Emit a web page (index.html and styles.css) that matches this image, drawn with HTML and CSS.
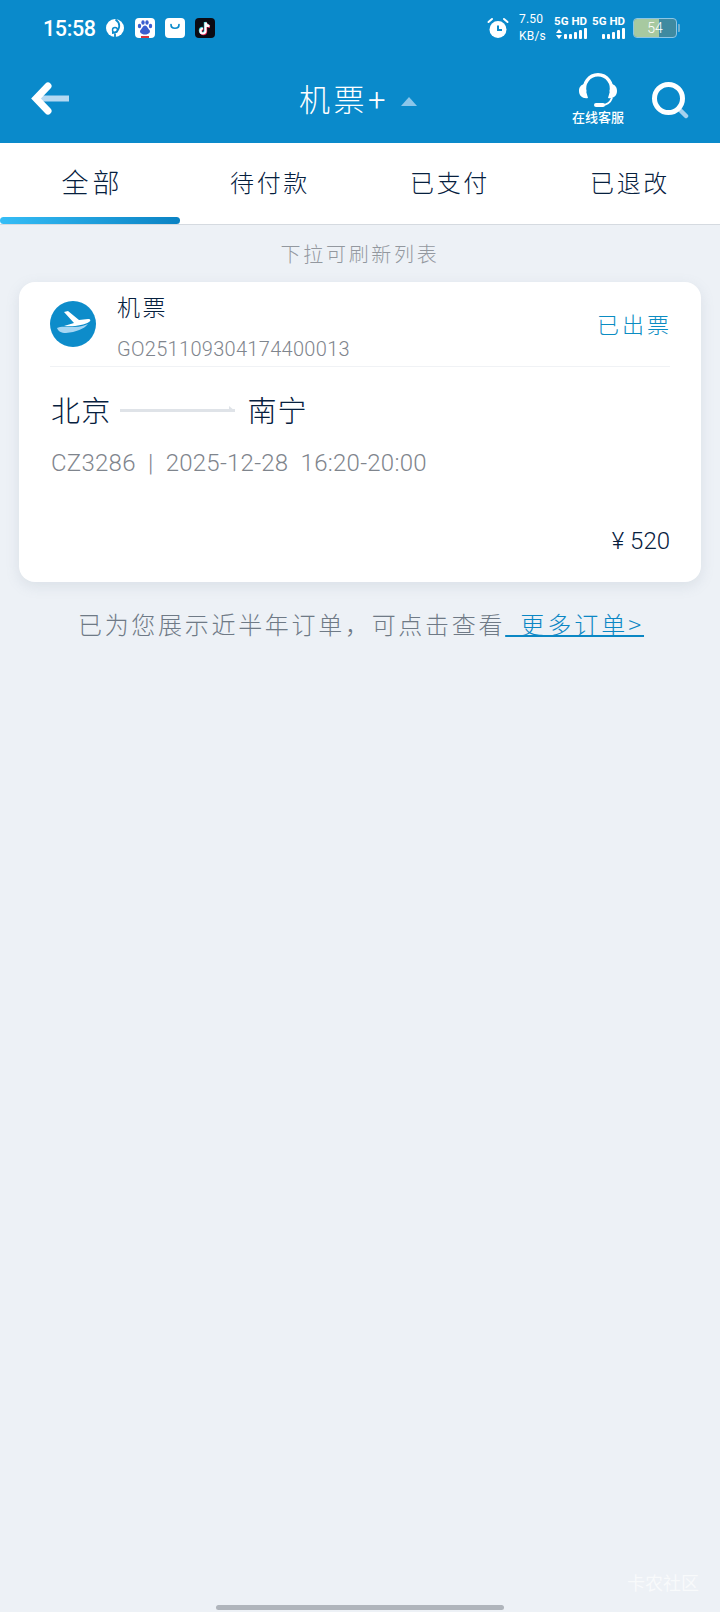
FILE: index.html
```html
<!DOCTYPE html>
<html lang="zh">
<head>
<meta charset="utf-8">
<title>机票+</title>
<link rel="stylesheet" href="styles.css">
</head>
<body>
<header class="top">
  <div class="status">
    <span class="time">15:58</span>
    <svg class="st-icon st-globe" viewBox="0 0 18 18"><circle cx="9" cy="9" r="9" fill="#fff"/><path d="M9.500 .5c3.500 2.500 4.500 6 3 9.500-1 2.500-3.500 4-6.500 4" fill="none" stroke="#0a8acb" stroke-width="1.800"/><circle cx="9" cy="11" r="2.500" fill="none" stroke="#0a8acb" stroke-width="1.400"/><path d="M9 14.500v3.500" stroke="#0a8acb" stroke-width="1.800"/></svg>
    <svg class="st-icon st-app" viewBox="0 0 20 20"><rect width="20" height="20" rx="4" fill="#fff"/><g fill="#3a5fd0"><ellipse cx="4.500" cy="8" rx="1.700" ry="2.300"/><ellipse cx="8" cy="4.500" rx="1.700" ry="2.300"/><ellipse cx="12" cy="4.500" rx="1.700" ry="2.300"/><ellipse cx="15.500" cy="8" rx="1.700" ry="2.300"/><path d="M10 7.500c-2 0-3 3-4.500 4.500C4 14 6 16.500 10 16.500s6-2.500 4.500-4.500C13 10.500 12 7.500 10 7.500z"/></g><rect x="6" y="18" width="8" height="2" fill="#d9363e"/></svg>
    <svg class="st-icon st-app" viewBox="0 0 20 20"><rect width="20" height="20" rx="4" fill="#fff"/><path d="M6 6.500c0 5 8 5 8 0" fill="none" stroke="#0a8acb" stroke-width="1.700" stroke-linecap="round"/></svg>
    <svg class="st-icon st-app" viewBox="0 0 20 20"><rect width="20" height="20" rx="4" fill="#0b0b14"/><path d="M10 4v8.500a2.500 2.500 0 1 1-2.500-2.500M10 4c.3 2.200 1.800 3.500 4 3.700" fill="none" stroke="#25d4de" stroke-width="2.400"/><path d="M11 5v8.500a2.500 2.500 0 1 1-2.500-2.500M11 5c.3 2.200 1.800 3.500 4 3.700" fill="none" stroke="#ee1d52" stroke-width="2.400"/><path d="M10.500 4.500v8.500a2.500 2.500 0 1 1-2.500-2.500M10.500 4.500c.3 2.200 1.800 3.500 4 3.700" fill="none" stroke="#fff" stroke-width="2.200"/></svg>
    <span class="spacer"></span>
    <svg class="st-alarm" viewBox="0 0 22 22"><path d="M1.500 5l3.500-3M20.500 5l-3.500-3" stroke="#fff" stroke-width="2" stroke-linecap="round"/><circle cx="11" cy="12.500" r="8.500" fill="#fff"/><path d="M11 8.500v4.500h4" fill="none" stroke="#0a8acb" stroke-width="2"/></svg>
    <div class="speed"><span>7.50</span><span>KB/s</span></div>
    <div class="sim">
      <span class="sim-label">5G HD</span>
      <div class="bars"><svg class="updown" viewBox="0 0 6 10"><path d="M3 0 6 4H0zM3 10 0 6h6z" fill="#fff"/></svg><i class="b1"></i><i class="b1"></i><i class="b2"></i><i class="b3"></i><i class="b4"></i></div>
    </div>
    <div class="sim sim-second">
      <span class="sim-label">5G HD</span>
      <div class="bars"><i class="b1"></i><i class="b1"></i><i class="b2"></i><i class="b3"></i><i class="b4"></i></div>
    </div>
    <div class="battery"><div class="battery-fill"></div><span class="battery-num">54</span></div>
    <span class="battery-tip"></span>
  </div>
  <nav class="nav">
    <svg class="back" viewBox="0 0 38 34"><path d="M8 16.500h30" stroke="#b5d9f2" stroke-width="6"/><path d="M17 4 5 16.500 17 29" fill="none" stroke="#fff" stroke-width="7" stroke-linecap="round"/></svg>
    <div class="title"><span>机票+</span><i class="caret"></i></div>
    <div class="service">
      <svg class="headset" viewBox="0 0 40 36"><path d="M7 19A13.500 13.500 0 1 1 33 19" fill="none" stroke="#fff" stroke-width="3.500"/><path d="M1 18c0-4 2-6 5-7l4 14c-5 1-9-2-9-7zM39 18c0-4-2-6-5-7l-4 14c5 1 9-2 9-7z" fill="#fff"/><path d="M34 25c-2 5-5 7-10 7" fill="none" stroke="#fff" stroke-width="2"/><rect x="16" y="30" width="11" height="4" rx="2" fill="#fff"/></svg>
      <span>在线客服</span>
    </div>
    <svg class="search" viewBox="0 0 38 38"><path d="M27 28l7 7" stroke="#a6d2ee" stroke-width="4.500" stroke-linecap="round"/><circle cx="16.500" cy="17.500" r="14" fill="none" stroke="#fff" stroke-width="5"/></svg>
  </nav>
</header>
<div class="tabs">
  <div class="tab tab-on">全部</div>
  <div class="tab">待付款</div>
  <div class="tab">已支付</div>
  <div class="tab">已退改</div>
</div>
<main class="content">
  <p class="hint">下拉可刷新列表</p>
  <section class="card">
    <div class="card-head">
      <svg class="plane" viewBox="0 0 46 46"><circle cx="23" cy="23" r="23" fill="#0d8cca"/><path d="M14 11 18 10 29 19 38 18C41 18 41 20 39 21 34 24 24 26 14 25L24 22z" fill="#fff"/><path d="M7 27C10 25 18 26 24 26 30 26 35 24 38 23 34 28 26 31 16 32 11 32 8 30 7 27z" fill="#a6d6f3"/></svg>
      <div class="head-text">
        <div class="kind">机票</div>
        <div class="order">GO251109304174400013</div>
      </div>
      <div class="state">已出票</div>
    </div>
    <div class="route">
      <span>北京</span>
      <svg class="route-arrow" viewBox="0 0 115 8"><path d="M0 5h115l-6-5v3" fill="#dfe3e8"/><rect y="3" width="115" height="3" fill="#dfe3e8"/></svg>
      <span>南宁</span>
    </div>
    <div class="flight">CZ3286&nbsp; | &nbsp;2025-12-28&nbsp; 16:20-20:00</div>
    <div class="price">¥ 520</div>
  </section>
  <p class="more">已为您展示近半年订单，可点击查看<a class="more-link">&ensp;更多订单&gt;</a></p>
  <div class="grow"></div>
  <div class="watermark">卡农社区</div>
  <div class="home-bar"></div>
</main>
</body>
</html>
```
FILE: styles.css
```css
* { box-sizing: border-box; }
html, body { margin: 0; padding: 0; }
body {
  width: 720px;
  height: 1612px;
  display: flex;
  flex-direction: column;
  background: #edf1f6;
  font-family: Roboto, "Noto Sans CJK SC", sans-serif;
  overflow: hidden;
}
.top { height: 143px; background: #0a8acb; color: #fff; flex: none; }
.status { height: 56px; padding: 0 40px 0 43px; display: flex; align-items: center; }
.time { font-size: 21.500px; font-weight: 500; width: 63px; letter-spacing: -.4px; }
.st-icon { width: 19px; height: 19px; margin-right: 10px; flex: none; }
.st-app { width: 20px; height: 20px; }
.st-globe { width: 18px; height: 18px; margin-right: 11px; }
.spacer { flex: 1; }
.st-alarm { width: 22px; height: 22px; margin-right: 10px; }
.speed { width: 36px; display: flex; flex-direction: column; align-items: flex-start; font-size: 12px; line-height: 17px; letter-spacing: .2px; }
.speed span { display: block; }
.sim { width: 32px; margin-top: -2px; display: flex; flex-direction: column; align-items: flex-end; }
.sim-second { margin-left: 6px; }
.sim-label { font-size: 11.500px; font-weight: 700; line-height: 13px; white-space: nowrap; }
.bars { height: 11.500px; display: flex; align-items: flex-end; gap: 1.500px; }
.bars i { display: block; flex: none; width: 3.500px; background: #fff; border-radius: 1px; }
.updown { flex: none; width: 6px; height: 10px; }
.b1 { height: 5px; }
.b2 { height: 7px; }
.b3 { height: 9px; }
.b4 { height: 11px; }
.battery {
  position: relative;
  width: 44px;
  height: 20px;
  margin-left: 8px;
  border: 1px solid #8cc6e6;
  border-radius: 4px;
  background: #3f8aa0;
  overflow: hidden;
}
.battery-fill { width: 25px; height: 100%; background: #a7c9a0; }
.battery-num { position: absolute; inset: 0; text-align: center; font-size: 14px; line-height: 18px; font-weight: 300; }
.battery-tip { width: 2px; height: 8px; margin-left: 1px; background: #6fb0cf; border-radius: 0 1px 1px 0; }
.nav { height: 87px; padding: 0 30px 0 31px; display: flex; align-items: flex-start; }
.back { width: 38px; height: 34px; margin-top: 26px; flex: none; }
.title {
  flex: 1;
  margin-top: 20px;
  padding-left: 230px;
  display: flex;
  align-items: center;
  font-size: 31px;
  line-height: 50px;
  font-weight: 300;
  letter-spacing: 3.500px;
}
.caret {
  width: 0;
  height: 0;
  margin-left: 12px;
  border-left: 8px solid transparent;
  border-right: 8px solid transparent;
  border-bottom: 9px solid #8cc6ea;
}
.service { width: 56px; margin-right: 26px; margin-top: 17px; display: flex; flex-direction: column; align-items: center; font-size: 13px; font-weight: 500; line-height: 18px; white-space: nowrap; }
.headset { width: 40px; height: 36px; flex: none; }
.search { width: 38px; height: 38px; margin-top: 25px; flex: none; }
.tabs { height: 82px; flex: none; display: grid; grid-template-columns: repeat(4, 180px); background: #fff; border-bottom: 1px solid #d5dae0; }
.tab {
  height: 81px;
  padding-bottom: 4px;
  display: flex;
  align-items: center;
  justify-content: center;
  font-family: "Noto Sans CJK SC", sans-serif;
  font-size: 24px;
  font-weight: 300;
  letter-spacing: 2.700px;
  color: #06203e;
}
.tab-on {
  font-size: 27px;
  letter-spacing: 4px;
  padding-left: 5px;
  position: relative;
}
.tab-on::after {
  content: "";
  position: absolute;
  left: 0;
  right: 0;
  bottom: 0;
  height: 7px;
  border-radius: 4px;
  background: linear-gradient(90deg, #35bdf6, #0a82c3);
}
.content { flex: 1; display: flex; flex-direction: column; }
.hint {
  margin: 0;
  height: 57px;
  display: flex;
  align-items: center;
  justify-content: center;
  font-family: "Noto Sans CJK SC", sans-serif;
  font-size: 20px;
  font-weight: 300;
  letter-spacing: 2.700px;
  color: #93989f;
}
.card {
  margin: 0 19px;
  height: 300px;
  padding: 0 31px;
  background: #fff;
  border-radius: 16px;
  box-shadow: 0 4px 14px rgba(120, 135, 155, .16);
}
.card-head { height: 85px; border-bottom: 1px solid #f0f2f5; display: flex; align-items: center; }
.plane { width: 46px; height: 46px; flex: none; margin-top: -1px; }
.head-text { flex: 1; margin-left: 21px; }
.kind { font-family: "Noto Sans CJK SC", sans-serif; font-size: 23px; line-height: 34px; font-weight: 300; letter-spacing: 2.500px; color: #06203e; margin-top: 4px; }
.order { font-size: 20px; line-height: 30px; font-weight: 300; letter-spacing: .3px; color: #7f858d; margin-top: 11px; white-space: nowrap; }
.state { font-family: "Noto Sans CJK SC", sans-serif; font-size: 22px; font-weight: 300; letter-spacing: 3px; color: #0b8cc2; margin: -2px -2px 0 0; }
.route {
  margin-top: 22px;
  padding-left: 1px;
  display: flex;
  align-items: center;
  font-family: "Noto Sans CJK SC", sans-serif;
  font-size: 29px;
  line-height: 40px;
  font-weight: 300;
  color: #06203e;
  letter-spacing: 1.200px;
}
.route-arrow { width: 115px; height: 8px; flex: none; margin: 2px 12px 0 9px; }
.flight { margin-top: 17px; padding-left: 1px; font-size: 24px; line-height: 34px; font-weight: 300; letter-spacing: .25px; color: #7f858d; white-space: nowrap; }
.price { margin-top: 45px; text-align: right; font-size: 24px; line-height: 32px; font-weight: 300; color: #06203e; }
.more {
  margin: 24px 0 0;
  padding-left: 2px;
  text-align: center;
  font-family: "Noto Sans CJK SC", sans-serif;
  font-size: 24px;
  line-height: 36px;
  font-weight: 300;
  letter-spacing: 2.700px;
  color: #6f7a86;
}
.more-link { color: #0b87c4; text-decoration: underline; text-decoration-thickness: 2px; letter-spacing: 3px; }
.grow { flex: 1; }
.watermark {
  align-self: flex-end;
  margin-right: 21px;
  font-family: "Noto Sans CJK SC", sans-serif;
  font-size: 18px;
  line-height: 24px;
  color: #fff;
  opacity: .65;
}
.home-bar { width: 288px; height: 5px; margin: 11px 0 2px 216px; border-radius: 3px; background: #b0b5bc; }
```
